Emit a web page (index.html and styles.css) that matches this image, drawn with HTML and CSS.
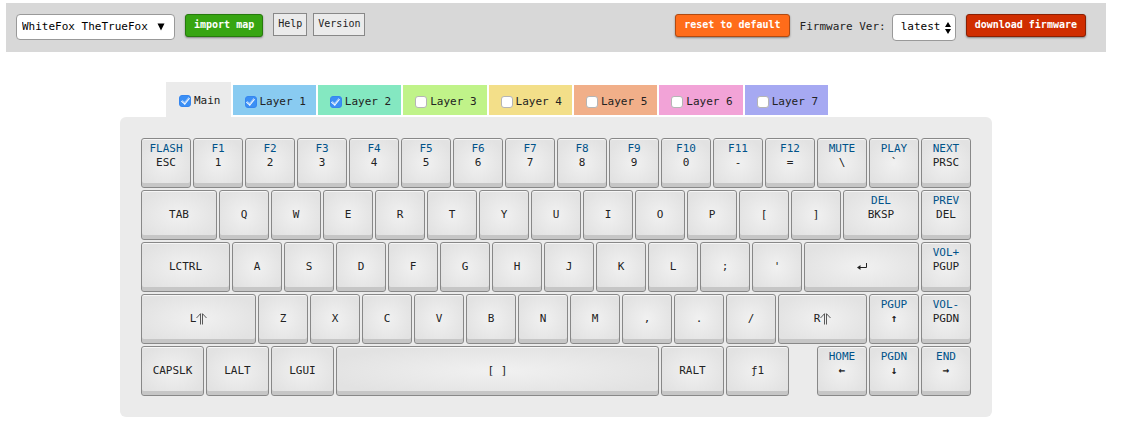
FILE: index.html
```html
<!DOCTYPE html>
<html lang="en">
<head>
<meta charset="utf-8">
<title>Keyboard Configurator</title>
<link rel="stylesheet" href="styles.css">
</head>
<body>
<svg class="defs" aria-hidden="true">
  <symbol id="shift" viewBox="0 0 11 12"><path d="M.5 5 4.5.7V11.500M10.500 5 6.500.7V11.500" fill="none" stroke="#333" stroke-width=".8"/></symbol>
</svg>
<header class="toolbar">
  <div class="group">
    <div class="picker picker-map">
      <select aria-label="Keyboard"><option>WhiteFox TheTrueFox</option></select>
      <svg class="picker-icon" width="8" height="8" viewBox="0 0 8 8" aria-hidden="true"><path d="M.5.5h7L4 7.500z"/></svg>
    </div>
    <button class="btn btn-green">import map</button>
    <div class="links">
      <button class="plain">Help</button>
      <button class="plain">Version</button>
    </div>
  </div>
  <div class="group">
    <button class="btn btn-orange">reset to default</button>
    <div class="field">
      <label for="version">Firmware Ver:</label>
      <div class="picker picker-version">
        <select id="version"><option>latest</option></select>
        <svg class="picker-icon" width="6" height="12" viewBox="0 0 6 12" aria-hidden="true"><path d="M0 5 3 0 6 5zM0 7h6l-3 5z"/></svg>
      </div>
    </div>
    <button class="btn btn-red">download firmware</button>
  </div>
</header>
<main class="board">
  <div class="tabs">
    <label class="tab tab-main"><input type="checkbox" checked>Main</label>
    <label class="tab tab-1"><input type="checkbox" checked>Layer 1</label>
    <label class="tab tab-2"><input type="checkbox" checked>Layer 2</label>
    <label class="tab tab-3"><input type="checkbox">Layer 3</label>
    <label class="tab tab-4"><input type="checkbox">Layer 4</label>
    <label class="tab tab-5"><input type="checkbox">Layer 5</label>
    <label class="tab tab-6"><input type="checkbox">Layer 6</label>
    <label class="tab tab-7"><input type="checkbox">Layer 7</label>
  </div>
  <div class="keys">
    <button class="key"><span class="fn">FLASH</span><span>ESC</span></button>
    <button class="key"><span class="fn">F1</span><span>1</span></button>
    <button class="key"><span class="fn">F2</span><span>2</span></button>
    <button class="key"><span class="fn">F3</span><span>3</span></button>
    <button class="key"><span class="fn">F4</span><span>4</span></button>
    <button class="key"><span class="fn">F5</span><span>5</span></button>
    <button class="key"><span class="fn">F6</span><span>6</span></button>
    <button class="key"><span class="fn">F7</span><span>7</span></button>
    <button class="key"><span class="fn">F8</span><span>8</span></button>
    <button class="key"><span class="fn">F9</span><span>9</span></button>
    <button class="key"><span class="fn">F10</span><span>0</span></button>
    <button class="key"><span class="fn">F11</span><span>-</span></button>
    <button class="key"><span class="fn">F12</span><span>=</span></button>
    <button class="key"><span class="fn">MUTE</span><span>\</span></button>
    <button class="key"><span class="fn">PLAY</span><span>`</span></button>
    <button class="key"><span class="fn">NEXT</span><span>PRSC</span></button>

    <button class="key u150"><span class="fn"></span><span>TAB</span></button>
    <button class="key"><span class="fn"></span><span>Q</span></button>
    <button class="key"><span class="fn"></span><span>W</span></button>
    <button class="key"><span class="fn"></span><span>E</span></button>
    <button class="key"><span class="fn"></span><span>R</span></button>
    <button class="key"><span class="fn"></span><span>T</span></button>
    <button class="key"><span class="fn"></span><span>Y</span></button>
    <button class="key"><span class="fn"></span><span>U</span></button>
    <button class="key"><span class="fn"></span><span>I</span></button>
    <button class="key"><span class="fn"></span><span>O</span></button>
    <button class="key"><span class="fn"></span><span>P</span></button>
    <button class="key"><span class="fn"></span><span>[</span></button>
    <button class="key"><span class="fn"></span><span>]</span></button>
    <button class="key u150"><span class="fn">DEL</span><span>BKSP</span></button>
    <button class="key"><span class="fn">PREV</span><span>DEL</span></button>

    <button class="key u175"><span class="fn"></span><span>LCTRL</span></button>
    <button class="key"><span class="fn"></span><span>A</span></button>
    <button class="key"><span class="fn"></span><span>S</span></button>
    <button class="key"><span class="fn"></span><span>D</span></button>
    <button class="key"><span class="fn"></span><span>F</span></button>
    <button class="key"><span class="fn"></span><span>G</span></button>
    <button class="key"><span class="fn"></span><span>H</span></button>
    <button class="key"><span class="fn"></span><span>J</span></button>
    <button class="key"><span class="fn"></span><span>K</span></button>
    <button class="key"><span class="fn"></span><span>L</span></button>
    <button class="key"><span class="fn"></span><span>;</span></button>
    <button class="key"><span class="fn"></span><span>'</span></button>
    <button class="key u225" aria-label="Enter"><span class="fn"></span><span class="icon"><svg width="10" height="8" viewBox="0 0 10 8"><path d="M9.500 0V4.500H1.500" fill="none" stroke="#222"/><path d="M0 4.500 3.500 2V7z" fill="#222"/></svg></span></button>
    <button class="key"><span class="fn">VOL+</span><span>PGUP</span></button>

    <button class="key u225"><span class="fn"></span><span class="icon">L<svg width="11" height="12"><use href="#shift"/></svg></span></button>
    <button class="key"><span class="fn"></span><span>Z</span></button>
    <button class="key"><span class="fn"></span><span>X</span></button>
    <button class="key"><span class="fn"></span><span>C</span></button>
    <button class="key"><span class="fn"></span><span>V</span></button>
    <button class="key"><span class="fn"></span><span>B</span></button>
    <button class="key"><span class="fn"></span><span>N</span></button>
    <button class="key"><span class="fn"></span><span>M</span></button>
    <button class="key"><span class="fn"></span><span>,</span></button>
    <button class="key"><span class="fn"></span><span>.</span></button>
    <button class="key"><span class="fn"></span><span>/</span></button>
    <button class="key u175"><span class="fn"></span><span class="icon">R<svg width="11" height="12"><use href="#shift"/></svg></span></button>
    <button class="key"><span class="fn">PGUP</span><span class="arrow">↑</span></button>
    <button class="key"><span class="fn">VOL-</span><span>PGDN</span></button>

    <button class="key u125"><span class="fn"></span><span>CAPSLK</span></button>
    <button class="key u125"><span class="fn"></span><span>LALT</span></button>
    <button class="key u125"><span class="fn"></span><span>LGUI</span></button>
    <button class="key u625"><span class="fn"></span><span>[ ]</span></button>
    <button class="key u125"><span class="fn"></span><span>RALT</span></button>
    <button class="key u125"><span class="fn"></span><span>ƒ1</span></button>
    <div class="u050"></div>
    <button class="key"><span class="fn">HOME</span><span class="arrow">←</span></button>
    <button class="key"><span class="fn">PGDN</span><span class="arrow">↓</span></button>
    <button class="key"><span class="fn">END</span><span class="arrow">→</span></button>
  </div>
</main>
</body>
</html>
```
FILE: styles.css
```css
* {
  box-sizing: border-box;
}

body {
  margin: 3px 31px 6px 6px;
  background: #fff;
  color: #222;
  font: 11px/14px "DejaVu Sans Mono", monospace;
}

button,
select {
  margin: 0;
  font: inherit;
  color: inherit;
}

.defs {
  display: none;
}

.toolbar {
  display: flex;
  justify-content: space-between;
  padding: 10px 20px 11px 10px;
  background: #d8d8d8;
}

.group {
  display: flex;
  align-items: flex-start;
  gap: 10px;
}

.links {
  display: flex;
  gap: 6px;
}

.field {
  display: flex;
  align-items: center;
  gap: 6px;
}

.picker {
  position: relative;
  margin-top: 1px;
}

.picker select {
  display: block;
  appearance: none;
  height: 27px;
  border: 1px solid #999;
  border-radius: 4px;
  background: #fff;
  color: #000;
}

.picker-map select {
  width: 159px;
  height: 26px;
  padding: 0 20px 1px 5px;
}

.picker-version select {
  width: 64px;
  padding: 0 12px 1px 8px;
}

.picker-icon {
  position: absolute;
  top: 9px;
  right: 10px;
  pointer-events: none;
}

.picker-version .picker-icon {
  top: 8px;
  right: 5px;
}

.btn {
  height: 23px;
  margin-top: 1px;
  padding: 0 8px 2px;
  border: 1px solid;
  border-radius: 3px;
  box-shadow: 0 1px 2px rgba(0, 0, 0, .4);
  color: #fff;
  font-size: 10px;
  font-weight: bold;
}

.btn-green {
  border-color: #267a0d;
  background: #37a512;
}

.btn-orange {
  border-color: #b04a12;
  background: #ff6c1a;
}

.btn-red {
  border-color: #8b1f02;
  background: #d02d00;
}

.plain {
  height: 23px;
  padding: 0 4px 2px;
  border: 1px solid #888;
  background: #ebebeb;
  font-size: 10px;
}

.board {
  max-width: 872px;
  margin: 30px auto 0;
}

.tabs {
  display: flex;
  align-items: flex-start;
  gap: 2px;
  padding: 0 46px;
}

.tab {
  display: flex;
  align-items: center;
  gap: 3px;
  height: 30px;
  margin-top: 3px;
  padding: 3px 10px 0 12px;
}

.tab-main {
  height: 35px;
  margin-top: 0;
  padding: 3px 10px 0 13px;
  background: #ebebeb;
}

.tab-1 { background: #89cbf1; }
.tab-2 { background: #84e8c1; }
.tab-3 { background: #c0f389; }
.tab-4 { background: #f3df89; }
.tab-5 { background: #f1af89; }
.tab-6 { background: #f2a3d7; }
.tab-7 { background: #a6a9f2; }

.tab input {
  appearance: none;
  width: 12px;
  height: 12px;
  margin: 0;
  border: 1px solid #b5b5b5;
  border-radius: 3px;
  background: #fff;
}

.tab input:checked {
  display: grid;
  place-items: center;
  border-color: #3586f0;
  background: #3b8ff5;
}

.tab input:checked::after {
  content: "";
  width: 4px;
  height: 7px;
  margin-bottom: 2px;
  border: solid #fff;
  border-width: 0 1px 1px 0;
  box-shadow: inset -1px -1px rgba(255, 255, 255, .5);
  transform: rotate(40deg);
}

.keys {
  display: grid;
  grid-template-columns: repeat(64, 1fr);
  grid-auto-rows: 52px;
  padding: 20px;
  border-radius: 6px;
  background: #ebebeb;
}

.key {
  display: flex;
  flex-direction: column;
  align-items: center;
  grid-column: span 4;
  margin: 1px;
  padding: 3px 0 0;
  border: 1px solid #888;
  border-radius: 3px;
  background: radial-gradient(#f1f1f1, #e2e2e2 80%);
  box-shadow: inset 0 1px #f6f6f6, inset 0 -4px #c6c6c6;
}

.fn {
  min-height: 14px;
  color: #00538a;
}

.arrow {
  font-weight: bold;
}

.icon {
  display: flex;
  align-items: center;
  height: 14px;
}

.u050 { grid-column: span 2; }
.u125 { grid-column: span 5; }
.u150 { grid-column: span 6; }
.u175 { grid-column: span 7; }
.u225 { grid-column: span 9; }
.u625 { grid-column: span 25; }
```
